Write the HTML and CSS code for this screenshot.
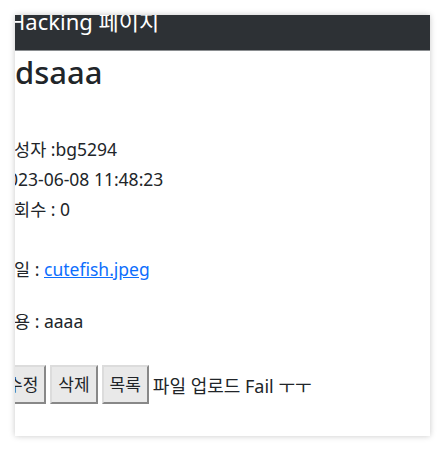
FILE: index.html
```html
<!DOCTYPE html>
<html lang="ko">
<head>
  <meta charset="UTF-8">
  <meta name="viewport" content="width=device-width, initial-scale=1.0">
  <title>Hacking 페이지</title>
  <link rel="stylesheet" href="styles.css">
</head>
<body>
  <div class="window">
    <div class="page">
      <nav class="navbar">
        <span class="brand">Hacking 페이지</span>
      </nav>
      <div class="content">
        <h1 class="title">dsaaa</h1>
        <div class="meta">
          <div>작성자 :bg5294</div>
          <div>2023-06-08 11:48:23</div>
          <div>조회수 : 0</div>
        </div>
        <div class="file">파일 : <a href="#">cutefish.jpeg</a></div>
        <div class="body-text">내용 : aaaa</div>
        <div class="actions">
          <button>수정</button>
          <button>삭제</button>
          <button>목록</button>
          <span class="status">파일 업로드 Fail ㅜㅜ</span>
        </div>
      </div>
    </div>
  </div>
</body>
</html>
```

FILE: styles.css
```css
body {
  margin: 0;
  padding: 15px;
  background-color: #ffffff;
  font-family: "Noto Sans", "Noto Sans CJK KR", sans-serif;
  color: #212529;
}
.window {
  width: 415px;
  height: 421px;
  overflow: hidden;
  background-color: #fff;
  box-shadow: 0 0 6px rgba(0, 0, 0, 0.22);
}
.page {
  margin-left: -17px;
  margin-top: -4px;
}
.navbar {
  height: 40px;
  background-color: #2d3135;
  border-bottom: 1px solid #8a8d90;
  padding-left: 11px;
}
.brand {
  display: block;
  color: #fff;
  font-size: 22px;
  line-height: 22px;
  margin-top: -5px;
}
.title {
  font-size: 31px;
  font-weight: 500;
  line-height: 38px;
  margin: 2px 0 0 17px;
}
.meta {
  margin-top: 43px;
  font-size: 17.5px;
  line-height: 30px;
}
.file {
  margin-top: 30px;
  font-size: 17.5px;
  line-height: 30px;
}
.file a {
  color: #0d6efd;
}
.body-text {
  margin-top: 22px;
  font-size: 17.5px;
  line-height: 30px;
}
.actions {
  margin-top: 29px;
  margin-left: 1px;
  font-size: 18px;
  display: flex;
  align-items: center;
  gap: 4px;
}
button {
  font-family: inherit;
  font-size: 17px;
  line-height: 23px;
  padding: 6px 6px;
  background-color: #e9e9e9;
  border: 2px outset #dcdcdc;
  color: #212529;
  margin: 0;
}
```
